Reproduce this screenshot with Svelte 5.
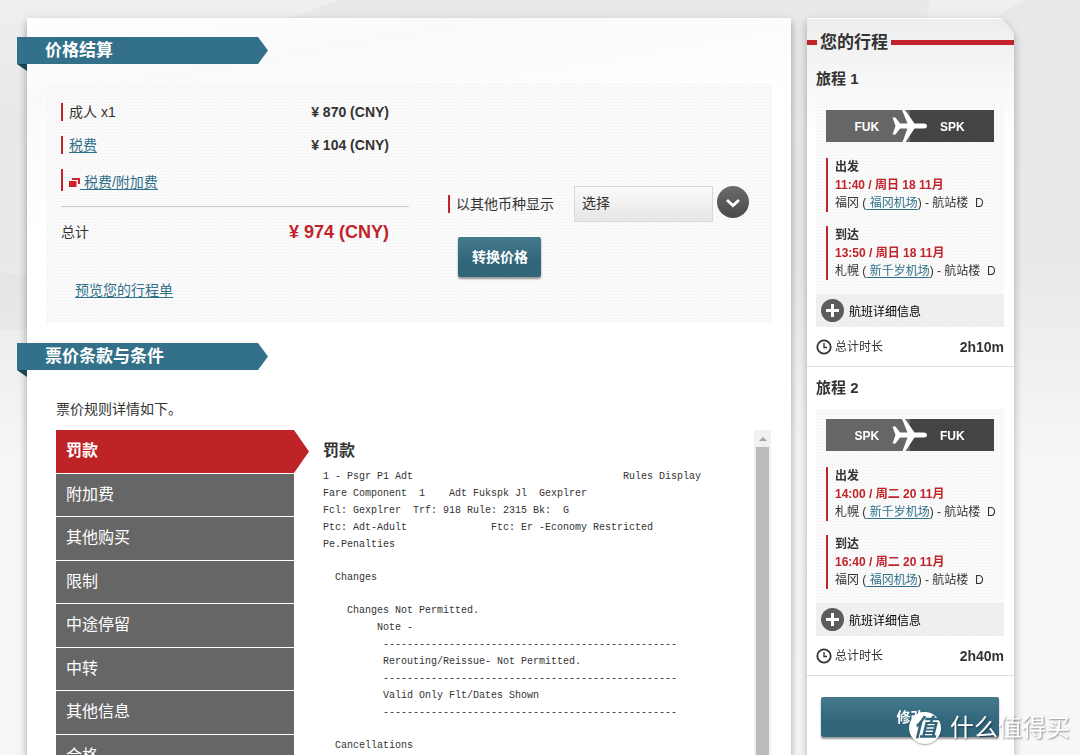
<script>
  const tabs = ['罚款', '附加费', '其他购买', '限制', '中途停留', '中转', '其他信息', '合格'];
  let active = $state(0);

  const dashes = '-'.repeat(49);
  const indent = (n, text) => ' '.repeat(n) + text;
  const rules = [
    [
      '1 - Psgr P1 Adt' + indent(35, 'Rules Display'),
      'Fare Component  1    Adt Fukspk Jl  Gexplrer',
      'Fcl: Gexplrer  Trf: 918 Rule: 2315 Bk:  G',
      'Ptc: Adt-Adult' + indent(14, 'Ftc: Er -Economy Restricted'),
      'Pe.Penalties'
    ],
    [indent(2, 'Changes')],
    [
      indent(4, 'Changes Not Permitted.'),
      indent(9, 'Note -'),
      indent(10, dashes),
      indent(10, 'Rerouting/Reissue- Not Permitted.'),
      indent(10, dashes),
      indent(10, 'Valid Only Flt/Dates Shown'),
      indent(10, dashes)
    ],
    [indent(2, 'Cancellations')]
  ];

  const journeys = [
    {
      name: '旅程 1', from: 'FUK', to: 'SPK', total: '2h10m',
      stops: [
        { kind: '出发', time: '11:40 / 周日 18 11月', city: '福冈', airport: '福冈机场' },
        { kind: '到达', time: '13:50 / 周日 18 11月', city: '札幌', airport: '新千岁机场' }
      ]
    },
    {
      name: '旅程 2', from: 'SPK', to: 'FUK', total: '2h40m',
      stops: [
        { kind: '出发', time: '14:00 / 周二 20 11月', city: '札幌', airport: '新千岁机场' },
        { kind: '到达', time: '16:40 / 周二 20 11月', city: '福冈', airport: '福冈机场' }
      ]
    }
  ];
</script>

<div class="page">
  <svg class="backdrop" viewBox="0 0 1080 755" preserveAspectRatio="none" aria-hidden="true">
    <defs>
      <linearGradient id="sheen" x1="0" y1="0" x2="0" y2="1">
        <stop offset="0" stop-color="#fff" stop-opacity="0.3" />
        <stop offset="1" stop-color="#fff" stop-opacity="0" />
      </linearGradient>
    </defs>
    <path d="M930 0H1025Q900 70 790 165V120Q925 60 930 0Z" fill="url(#sheen)" />
    <path d="M0 0H340L0 120Z" fill="url(#sheen)" />
    <path d="M0 272Q60 284 120 272V330H0Z" fill="#000" opacity="0.02" />
  </svg>

  <main class="sheet">
    <h2 class="ribbon"><span>价格结算</span></h2>

    <section class="pricing dotted">
      <div class="costs">
        <dl>
          <div class="row"><dt class="bar">成人 x1</dt><dd>¥ 870 (CNY)</dd></div>
          <div class="row"><dt class="bar"><a href="#tax">税费</a></dt><dd>¥ 104 (CNY)</dd></div>
          <div class="row"><dt class="bar tall">
            <svg width="11" height="9" viewBox="0 0 11 9" aria-hidden="true">
              <path d="M3 0H11V6H9V2H3Z" fill="#d0202a" />
              <path d="M0 3H7.500V9H0Z" fill="#d0202a" />
            </svg><a href="#fees">&nbsp;税费/附加费</a></dt></div>
          <div class="row total"><dt>总计</dt><dd>¥ 974 (CNY)</dd></div>
        </dl>
        <a class="preview" href="#receipt">预览您的行程单</a>
      </div>

      <form class="currency" onsubmit={(e) => e.preventDefault()}>
        <div class="pick">
          <label class="bar" for="currency">以其他币种显示</label>
          <div class="combo">
            <select id="currency"><option>选择</option></select>
            <svg width="32" height="32" viewBox="0 0 32 32" aria-hidden="true">
              <defs>
                <linearGradient id="knob" x1="0" y1="0" x2="0" y2="1">
                  <stop offset="0" stop-color="#6b6b6b" /><stop offset="1" stop-color="#4a4a4a" />
                </linearGradient>
              </defs>
              <circle cx="16" cy="16" r="16" fill="url(#knob)" />
              <path d="M10 14L16 19.500L22 14" fill="none" stroke="#fff" stroke-width="2.800" />
            </svg>
          </div>
        </div>
        <button class="cta">转换价格</button>
      </form>
    </section>

    <h2 class="ribbon"><span>票价条款与条件</span></h2>

    <section class="terms">
      <p>票价规则详情如下。</p>
      <div class="split">
        <nav class="tabs">
          {#each tabs as tab, i}
            <button class:active={i === active} onclick={() => (active = i)}>{tab}</button>
          {/each}
        </nav>
        <article class="rules">
          <h3>{tabs[active]}</h3>
          {#each rules as block}
            <pre>{block.join('\n')}</pre>
          {/each}
        </article>
        <div class="scroll" aria-hidden="true"><i></i><b></b></div>
      </div>
    </section>
  </main>

  <div class="side-shadow">
    <aside>
      <h2 class="title"><span>您的行程</span></h2>
      {#each journeys as j}
        <section class="journey">
          <h3>{j.name}</h3>
          <div class="card dotted">
            <div class="route">
              <span>{j.from}</span>
              <svg width="36" height="32" viewBox="0 0 36 32" aria-hidden="true">
                <path d="M0 0H12L18 16L12 32H0Z" fill="#666" />
                <path d="M10 0H13L22.500 13.500H32Q35 14 35 16Q35 18 32 18.500H22.500L13.500 32H10.500L15.500 18.500H8L3.500 24.500H0.500L3.500 16L0.500 7.500H3.500L8 13.500H15.500Z" fill="#fff" />
              </svg>
              <span>{j.to}</span>
            </div>
            {#each j.stops as s}
              <div class="stop">
                <strong>{s.kind}</strong>
                <strong class="when">{s.time}</strong>
                <span>{s.city} (<a href="#airport">&nbsp;{s.airport}</a>) - 航站楼&nbsp; D</span>
              </div>
            {/each}
            <button class="more dotted">
              <svg width="23" height="23" viewBox="0 0 23 23" aria-hidden="true">
                <circle cx="11.500" cy="11.500" r="11.500" fill="#5c5c5c" />
                <path d="M11.500 5V18M5 11.500H18" stroke="#fff" stroke-width="3" />
              </svg>
              航班详细信息
            </button>
          </div>
          <div class="duration">
            <svg width="16" height="16" viewBox="0 0 16 16" aria-hidden="true">
              <circle cx="8" cy="8" r="6.700" fill="none" stroke="#333" stroke-width="1.800" />
              <path d="M8 4V8.500H11" fill="none" stroke="#333" stroke-width="1.300" />
            </svg>
            <span>总计时长</span>
            <strong>{j.total}</strong>
          </div>
        </section>
      {/each}
      <button class="cta wide">修改</button>
    </aside>
  </div>

  <div class="mark"><span>值</span>什么值得买</div>
</div>

<style>
  :global(body) {
    margin: 0;
  }
  .page {
    position: relative;
    box-sizing: border-box;
    height: 100vh;
    overflow: hidden;
    display: flex;
    gap: 16px;
    padding: 18px 66px 0 27px;
    background: linear-gradient(#e8e8e8 0, #e9e9e9 35%, #f6f6f6 60%, #f7f7f7 100%);
    color: #333;
    font: 14px/18px "Liberation Sans", "Noto Sans CJK SC", sans-serif;
  }
  .backdrop {
    position: absolute;
    inset: 0;
    width: 100%;
    height: 100%;
  }
  h2, h3, p, dl, dd, pre {
    margin: 0;
  }
  a {
    color: #2f7189;
    text-underline-offset: 2px;
  }
  button {
    font-family: inherit;
    cursor: pointer;
  }
  .dotted {
    background: radial-gradient(circle, #f0f0f0 1px, transparent 1px) 0 0 / 3px 3px #fafafa;
  }

  .sheet {
    position: relative;
    flex: 1;
    min-width: 0;
    box-sizing: border-box;
    padding: 19px 19px 0;
    background: linear-gradient(170deg, #fff 0, #fafafa 80px, #fff 220px);
    box-shadow: 0 4px 8px rgba(0, 0, 0, 0.35);
  }
  .ribbon {
    position: relative;
    width: 251px;
    margin-left: -29px;
    color: #fff;
    font-size: 17px;
    line-height: 27px;
  }
  .ribbon span {
    display: block;
    padding-left: 28px;
    background: #327189;
    clip-path: polygon(0 0, 241px 0, 100% 50%, 241px 100%, 0 100%);
  }
  .ribbon::after {
    content: "";
    position: absolute;
    left: 0;
    top: 100%;
    width: 10px;
    height: 7px;
    background: #164557;
    clip-path: polygon(0 0, 100% 0, 100% 100%);
  }

  .pricing {
    display: flex;
    gap: 39px;
    box-sizing: border-box;
    min-height: 240px;
    margin: 19px 0 20px;
    padding: 20px 15px;
  }
  .costs {
    width: 348px;
  }
  .row {
    display: flex;
    justify-content: space-between;
    margin-bottom: 15px;
  }
  .bar {
    padding-left: 6px;
    border-left: 2px solid #c02329;
  }
  .tall {
    padding-top: 4px;
  }
  .row dd {
    margin-right: 20px;
    font-weight: bold;
  }
  .total {
    padding-top: 16px;
    border-top: 1px solid #ccc;
  }
  .total dd {
    color: #c02329;
    font-size: 18px;
  }
  .preview {
    display: inline-block;
    margin: 25px 0 0 14px;
  }
  .currency {
    padding-top: 83px;
  }
  .pick, .combo {
    display: flex;
  }
  .pick {
    gap: 20px;
    align-items: center;
    height: 36px;
  }
  .combo {
    gap: 4px;
  }
  select {
    appearance: none;
    box-sizing: border-box;
    width: 139px;
    height: 36px;
    padding: 0 7px 3px;
    border: 1px solid #d9d9d9;
    border-radius: 0;
    background: linear-gradient(#fafafa, #e6e6e6);
    color: #333;
    font: inherit;
  }
  .cta {
    height: 40px;
    margin: 15px 0 0 10px;
    padding: 0 13px 2px 14px;
    border: 0;
    border-radius: 2px;
    background: linear-gradient(#467a8d, #30657a 65%);
    box-shadow: 0 2px 2px rgba(0, 0, 0, 0.4);
    color: #fff;
    font-size: 14px;
    font-weight: bold;
  }

  .terms {
    padding: 30px 1px 0 10px;
  }
  .split {
    display: flex;
    margin-top: 12px;
  }
  .tabs {
    display: flex;
    flex-direction: column;
    gap: 1px;
    width: 238px;
  }
  .tabs button {
    flex: none;
    height: 43px;
    padding: 0 0 5px 10px;
    border: 0;
    background: #666;
    color: #fff;
    font-size: 16px;
    text-align: left;
  }
  .tabs button:nth-child(even) {
    height: 42px;
  }
  .tabs .active {
    width: 253px;
    background: #be2328;
    font-weight: bold;
    clip-path: polygon(0 0, 238px 0, 100% 50%, 238px 100%, 0 100%);
  }
  .rules {
    flex: 1;
    padding: 11px 0 0 29px;
  }
  .rules h3 {
    margin-bottom: 7px;
    font-size: 16px;
    line-height: 20px;
  }
  pre {
    margin-bottom: 16px;
    font: 10px/17px "Liberation Mono", monospace;
  }
  .scroll {
    display: flex;
    flex-direction: column;
    align-items: center;
    width: 17px;
    background: #f1f1f1;
  }
  .scroll i {
    margin: 7px 0 6px;
    border: 4px solid transparent;
    border-top: 0;
    border-bottom-color: #a3a3a3;
  }
  .scroll b {
    flex: 1;
    width: 13px;
    background: #bbb;
  }

  .side-shadow {
    position: relative;
    width: 207px;
    filter: drop-shadow(0 4px 4px rgba(0, 0, 0, 0.3));
  }
  aside {
    min-height: 100%;
    background: linear-gradient(#ededed 0, #fff 110px);
    border-top: 1px solid #fff;
    box-sizing: border-box;
    clip-path: polygon(0 0, calc(100% - 12px) 0, 100% 15px, 100% 100%, 0 100%);
  }
  .title {
    display: flex;
    align-items: center;
    gap: 3px;
    padding: 12px 0 5px;
    font-size: 17px;
    line-height: 22px;
  }
  .title span {
    padding-top: 2px;
    line-height: 20px;
  }
  .title::before, .title::after {
    content: "";
    width: 10px;
    height: 5px;
    background: #c02329;
  }
  .title::after {
    flex: 1;
  }
  .journey {
    box-sizing: border-box;
    height: 309px;
    padding: 10px 10px 0 9px;
    border-bottom: 1px solid #ddd;
  }
  .journey h3 {
    margin-bottom: 10px;
    font-size: 15px;
    line-height: 22px;
  }
  .card {
    padding-top: 10px;
  }
  .route {
    display: flex;
    justify-content: space-between;
    align-items: center;
    height: 32px;
    margin: 0 10px 16px;
    background: linear-gradient(90deg, #666 50%, #444 50%);
    color: #fff;
    font-size: 12px;
    font-weight: bold;
  }
  .route span {
    flex: 1;
    padding: 2px 0 0 16px;
    text-align: center;
  }
  .route span:last-child {
    padding: 2px 17px 0 0;
  }
  .stop {
    display: flex;
    flex-direction: column;
    margin: 0 0 14px 10px;
    padding-left: 7px;
    border-left: 2px solid #c02329;
    font-size: 12px;
    white-space: nowrap;
  }
  .when {
    color: #c02329;
  }
  .more {
    display: flex;
    align-items: center;
    gap: 5px;
    width: 100%;
    height: 33px;
    padding: 0 5px;
    border: 0;
    background-color: #f0f0f0;
    background-image: radial-gradient(circle, #e8e8e8 1px, transparent 1px);
    color: #000;
    font-size: 12px;
  }
  .duration {
    display: flex;
    align-items: center;
    gap: 3px;
    margin-top: 11px;
    font-size: 12px;
  }
  .duration strong {
    margin-left: auto;
    font-size: 14px;
  }
  .wide {
    display: block;
    width: 178px;
    margin: 21px 0 0 14px;
  }

  .mark {
    position: absolute;
    right: 10px;
    bottom: 10px;
    display: flex;
    align-items: center;
    gap: 9px;
    color: #fff;
    font-size: 24px;
    line-height: 34px;
    text-shadow: 1px 1px 2px rgba(0, 0, 0, 0.45);
  }
  .mark span {
    width: 32px;
    height: 32px;
    border-radius: 50%;
    background: #fff;
    box-shadow: 0 1px 2px rgba(0, 0, 0, 0.35);
    color: #30657a;
    font-weight: bold;
    font-style: italic;
    line-height: 32px;
    text-align: center;
    text-shadow: none;
  }
</style>
